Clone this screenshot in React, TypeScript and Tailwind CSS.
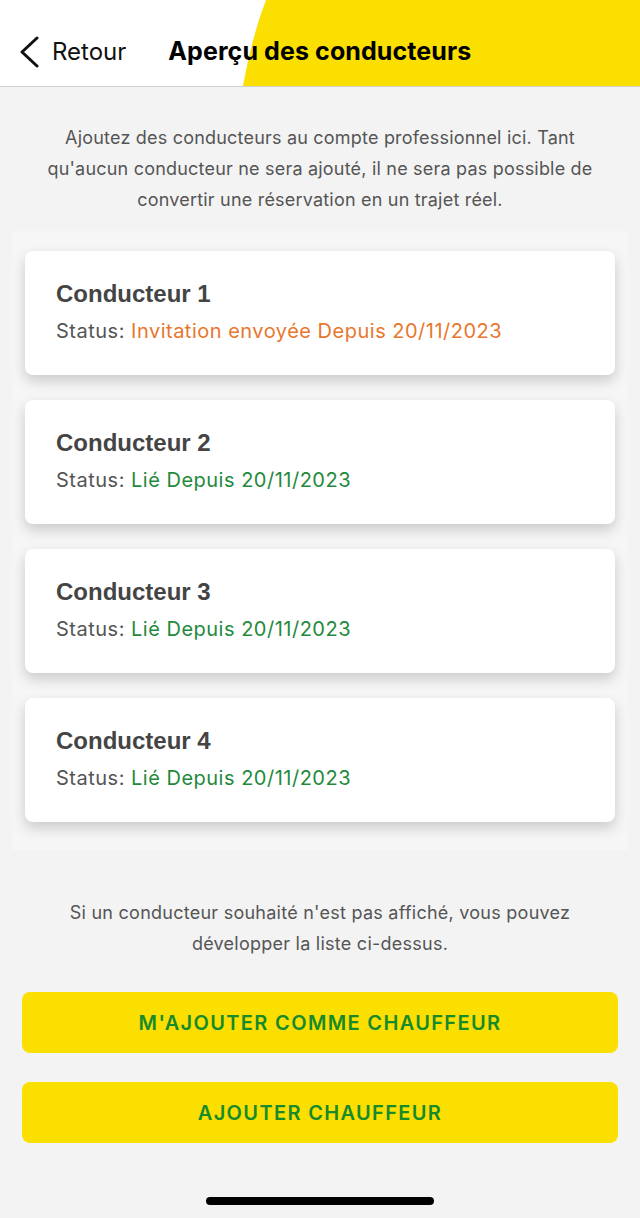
type Driver = {
  name: string;
  status: string;
  tone: 'pending' | 'linked';
};

const DRIVERS: Driver[] = [
  { name: 'Conducteur 1', status: 'Invitation envoyée Depuis 20/11/2023', tone: 'pending' },
  { name: 'Conducteur 2', status: 'Lié Depuis 20/11/2023', tone: 'linked' },
  { name: 'Conducteur 3', status: 'Lié Depuis 20/11/2023', tone: 'linked' },
  { name: 'Conducteur 4', status: 'Lié Depuis 20/11/2023', tone: 'linked' },
];

const DriverCard = ({ driver }: { driver: Driver }) => (
  <div className="bg-white rounded-lg shadow-[0_6px_14px_rgba(0,0,0,0.18)] pl-[31px] pr-4 pt-[28px] pb-[30px]">
    <div className="text-[24px] leading-[29px] font-bold text-[#444] font-['Liberation_Sans',Arial,sans-serif]">
      {driver.name}
    </div>
    <div className="mt-[9px] text-[20px] leading-[28px] text-[#555] tracking-[0.5px]">
      Status:{' '}
      <span className={driver.tone === 'pending' ? 'text-[#e8772e]' : 'text-[#1f8a3c]'}>
        {driver.status}
      </span>
    </div>
  </div>
);

const App = () => {
  return (
    <div className="w-[640px] h-[1218px] bg-[#f3f3f3] flex flex-col font-['Inter','Roboto',sans-serif] overflow-hidden">
      {/* header */}
      <div className="relative h-[87px] bg-white border-b border-[#d0d0d0] shrink-0">
        <svg className="absolute inset-0" width="640" height="86" viewBox="0 0 640 86">
          <path d="M266 0 Q252 36 243 86 L640 86 L640 0 Z" fill="#fadf00" />
        </svg>
        <div className="relative h-full flex items-center pt-[17px]">
          <div className="flex items-center pl-[19px] text-[24px] text-[#111]">
            <svg width="22" height="32" viewBox="0 0 22 32" fill="none">
              <path d="M18 2 L3 16 L18 30" stroke="#111" strokeWidth="3" strokeLinecap="round" strokeLinejoin="round" />
            </svg>
            <span className="ml-[11px]">Retour</span>
          </div>
          <div className="ml-[42px] text-[25px] font-bold text-black tracking-[0.1px]">
            Aperçu des conducteurs
          </div>
        </div>
      </div>

      {/* intro */}
      <p className="mt-[35px] px-[44px] text-center text-[18px] leading-[31px] text-[#555] tracking-[0.2px]">
        Ajoutez des conducteurs au compte professionnel ici. Tant qu'aucun conducteur ne sera ajouté, il ne sera pas possible de convertir une réservation en un trajet réel.
      </p>

      {/* list */}
      <div className="mt-[16px] mx-[12px] bg-[#f6f6f6] px-[13px] pt-[20px] pb-[28px] flex flex-col gap-[25px]">
        {DRIVERS.map((d) => (
          <DriverCard key={d.name} driver={d} />
        ))}
      </div>

      {/* footer note */}
      <p className="mt-[47px] px-[60px] text-center text-[18px] leading-[31px] text-[#555] tracking-[0.25px]">
        Si un conducteur souhaité n'est pas affiché, vous pouvez développer la liste ci-dessus.
      </p>

      <div className="mt-[33px] px-[22px] flex flex-col gap-[29px]">
        <button className="h-[61px] rounded-lg bg-[#fadf00] text-[#178a2b] text-[20px] font-semibold tracking-[1.35px]">
          M'AJOUTER COMME CHAUFFEUR
        </button>
        <button className="h-[61px] rounded-lg bg-[#fadf00] text-[#178a2b] text-[20px] font-semibold tracking-[1.35px]">
          AJOUTER CHAUFFEUR
        </button>
      </div>

      <div className="mt-auto mb-[13px] flex justify-center">
        <div className="w-[228px] h-[8px] rounded-full bg-black" />
      </div>
    </div>
  );
};

export default App;
